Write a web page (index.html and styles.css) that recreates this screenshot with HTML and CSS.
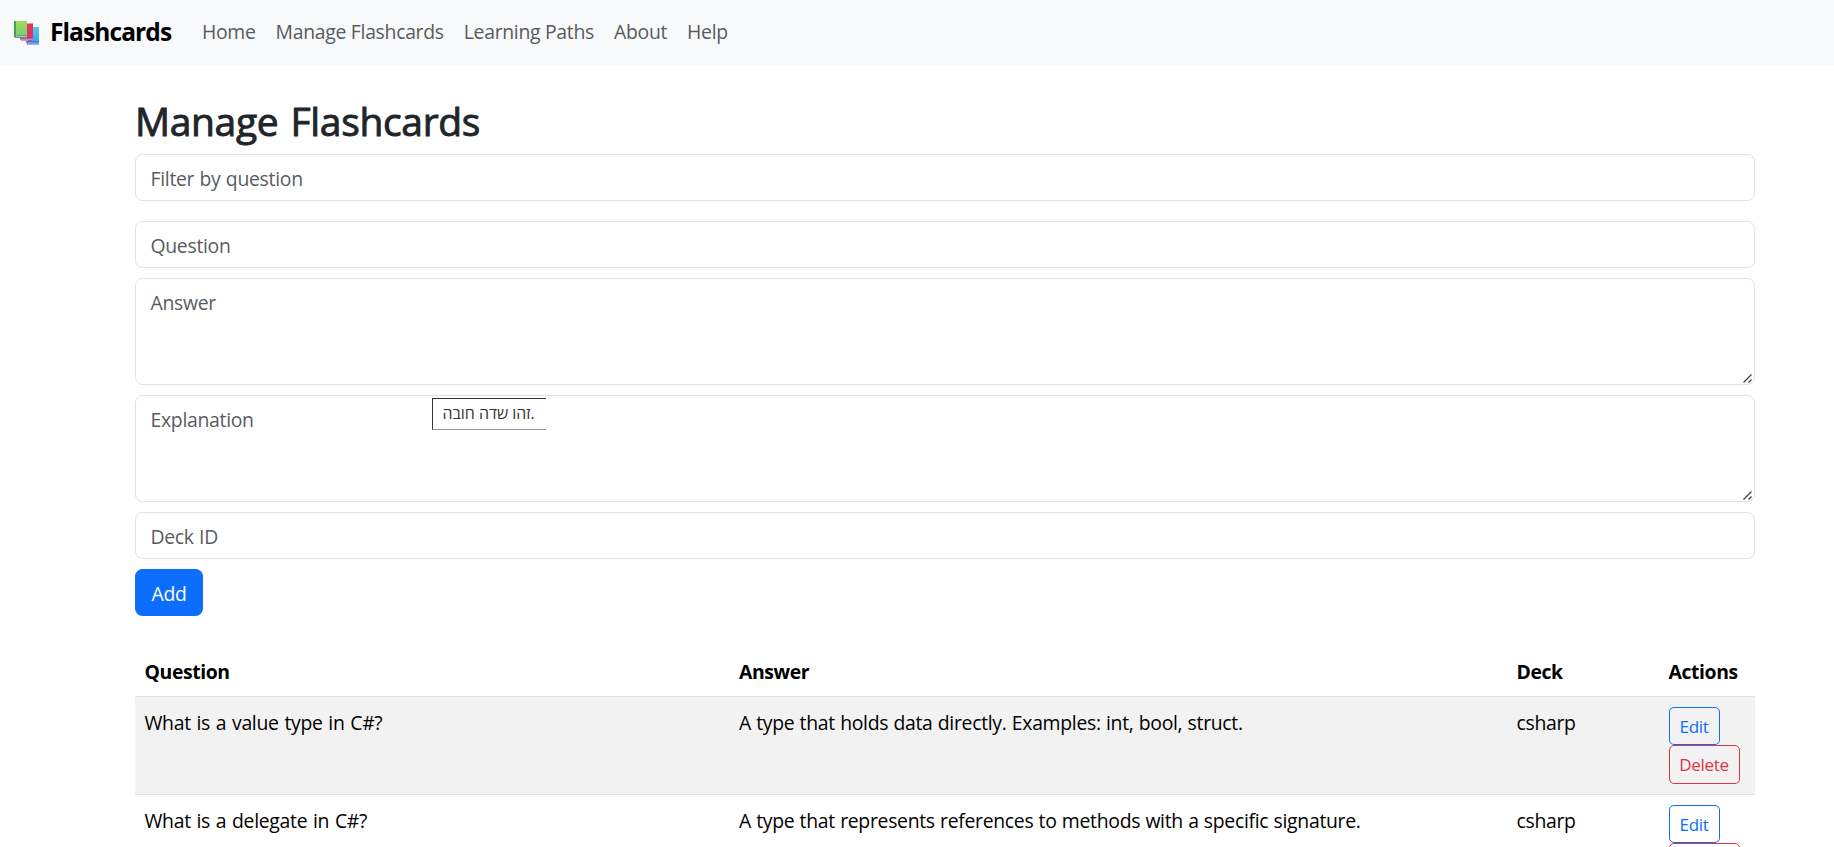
FILE: index.html
```
<!DOCTYPE html>
<html lang="en">
<head>
<meta charset="utf-8">
<title>Flashcards</title>
<link rel="stylesheet" href="styles.css">
</head>
<body>
<nav class="navbar">
  <a class="brand" href="#">
    <svg class="logo" viewBox="0 0 25 24" width="25" height="24" aria-hidden="true">
      <defs>
        <linearGradient id="g" x1="0" y1="0" x2="0" y2="1"><stop offset="0" stop-color="#a4dc58"/><stop offset="1" stop-color="#75cf78"/></linearGradient>
        <linearGradient id="b" x1="0" y1="0" x2="0" y2="1"><stop offset="0" stop-color="#50ccec"/><stop offset="1" stop-color="#3aa7ef"/></linearGradient>
      </defs>
      <path fill="url(#b)" d="M14 6h11v15H14z"/><path fill="#3b6fd0" d="M12 20h13v3.500H13z"/><path fill="#b9c4f4" d="M13.500 21.500H25v1H13.500z"/>
      <path fill="#e8335f" d="M8 2.500h11v15H8z"/><path fill="#b62b70" d="M5.500 16.500H18v3H7z"/><path fill="#e0c8de" d="M7 17.700h11v.9H7z"/>
      <path fill="url(#g)" d="M0 0h13v15H0z"/><path fill="#3fa34b" d="M0 0h2v16H0z"/><path fill="#3d8f75" d="M0 14.500h13v2.500H1z"/><path fill="#c4d3d8" d="M1.500 15.200H13v1H1.500z"/>
    </svg>
    <span class="brand-name">Flashcards</span>
  </a>
  <a class="nav-link" href="#">Home</a>
  <a class="nav-link" href="#">Manage Flashcards</a>
  <a class="nav-link" href="#">Learning Paths</a>
  <a class="nav-link" href="#">About</a>
  <a class="nav-link" href="#">Help</a>
</nav>
<main class="container">
  <h2 class="title">Manage Flashcards</h2>
  <input class="field filter" placeholder="Filter by question">
  <form class="form">
    <input class="field" placeholder="Question">
    <div class="field-wrap">
      <textarea class="field area" placeholder="Answer"></textarea>
      <svg class="grip" viewBox="0 0 9 9" width="9" height="9" aria-hidden="true"><path d="M.5 8.500l8-8M5.500 8.500l3-3"/></svg>
    </div>
    <div class="field-wrap">
      <textarea class="field area" placeholder="Explanation"></textarea>
      <svg class="grip" viewBox="0 0 9 9" width="9" height="9" aria-hidden="true"><path d="M.5 8.500l8-8M5.500 8.500l3-3"/></svg>
      <div class="tip">זהו שדה חובה.</div>
    </div>
    <input class="field" placeholder="Deck ID">
    <button class="add" type="button">Add</button>
  </form>
  <table class="cards">
    <colgroup><col class="c-question"><col class="c-answer"><col class="c-deck"><col class="c-actions"></colgroup>
    <thead><tr><th>Question</th><th>Answer</th><th>Deck</th><th>Actions</th></tr></thead>
    <tbody>
      <tr class="striped"><td>What is a value type in C#?</td><td>A type that holds data directly. Examples: int, bool, struct.</td><td>csharp</td>
        <td><div class="actions"><button class="btn edit">Edit</button><button class="btn delete">Delete</button></div></td></tr>
      <tr><td>What is a delegate in C#?</td><td>A type that represents references to methods with a specific signature.</td><td>csharp</td>
        <td><div class="actions"><button class="btn edit">Edit</button><button class="btn delete" aria-label="Delete"></button></div></td></tr>
    </tbody>
  </table>
</main>
</body>
</html>
```
FILE: styles.css
```
* { box-sizing: border-box; }
html { overflow: hidden; }
body { margin: 0; height: 847px; overflow: hidden; background: #fff; color: #000; font: 19.4px/30px "Open Sans", sans-serif; letter-spacing: -0.3px; }
.navbar { display: flex; align-items: center; height: 66px; padding: 0 14px 2px; background: #f8f9fa; }
.brand { display: flex; align-items: center; gap: 11px; width: 178px; color: #000; text-decoration: none; }
.logo { flex: none; margin-top: 2px; }
.brand-name { font-size: 24.5px; font-weight: 700; letter-spacing: -0.9px; }
.nav-link { padding: 0 10px; color: #595a5b; text-decoration: none; white-space: nowrap; }
.container { width: 1620px; margin: 0 0 0 135px; padding-top: 31px; }
.title { margin: 0 0 9px; height: 48px; font-size: 39px; line-height: 48px; font-weight: 400; letter-spacing: -0.35px; word-spacing: 2.5px; color: #212529; -webkit-text-stroke: 0.9px #212529; }
.field { display: block; width: 100%; height: 47px; margin: 0; padding: 8px 15px 6px 14.500px; border: 1px solid #dee2e6; border-radius: 7.5px; background: #fff; font: inherit; letter-spacing: inherit; word-spacing: 0.6px; color: #212529; outline: none; }
.field::placeholder { color: #595c5f; opacity: 1; }
.area { height: 107px; padding-top: 9px; resize: none; }
.filter { margin-bottom: 20px; }
.form { display: flex; flex-direction: column; gap: 10px; }
.field-wrap { position: relative; }
.grip { position: absolute; right: 3px; bottom: 2px; fill: none; stroke: #444; stroke-width: 1.3; }
.tip { position: absolute; left: 297px; top: 3px; width: 114px; height: 32px; padding-left: 9.500px; border: solid #333; border-width: 1px 0 1px 1px; border-bottom-color: #999; background: #fff; color: #333; font: 15.900px/29px "Open Sans", "Liberation Sans", sans-serif; letter-spacing: 0; white-space: nowrap; }
.add { align-self: flex-start; width: 68px; height: 47px; padding: 2px 0 0; border: 0; border-radius: 7.5px; background: #0d6efd; color: #fff; font: inherit; letter-spacing: inherit; }
.cards { width: 1620px; margin-top: 33px; table-layout: fixed; border-collapse: separate; border-spacing: 0; }
.c-question { width: 594.5px; }
.c-answer { width: 777.5px; }
.c-deck { width: 152px; }
.c-actions { width: 96px; }
.cards th, .cards td { padding: 8px 9.5px; text-align: left; vertical-align: top; border-bottom: 1px solid #dee2e6; white-space: nowrap; }
.cards th { font-weight: 700; height: 48px; letter-spacing: -0.4px; }
.cards td { height: 98px; padding-top: 11px; padding-bottom: 6px; word-spacing: 0.5px; }
.cards td:first-child { word-spacing: 1px; }
.striped td { background: #f2f2f2; }
.actions { display: flex; flex-direction: column; align-items: flex-start; margin-top: -1px; }
.btn { height: 38px; padding: 1px 0 0; border: 1px solid; border-radius: 5px; background: transparent; font: 17px/26px "Open Sans", sans-serif; letter-spacing: -0.3px; }
.edit { width: 51px; color: #0d6efd; }
.delete { width: 71px; height: 39px; color: #dc3545; }
```
